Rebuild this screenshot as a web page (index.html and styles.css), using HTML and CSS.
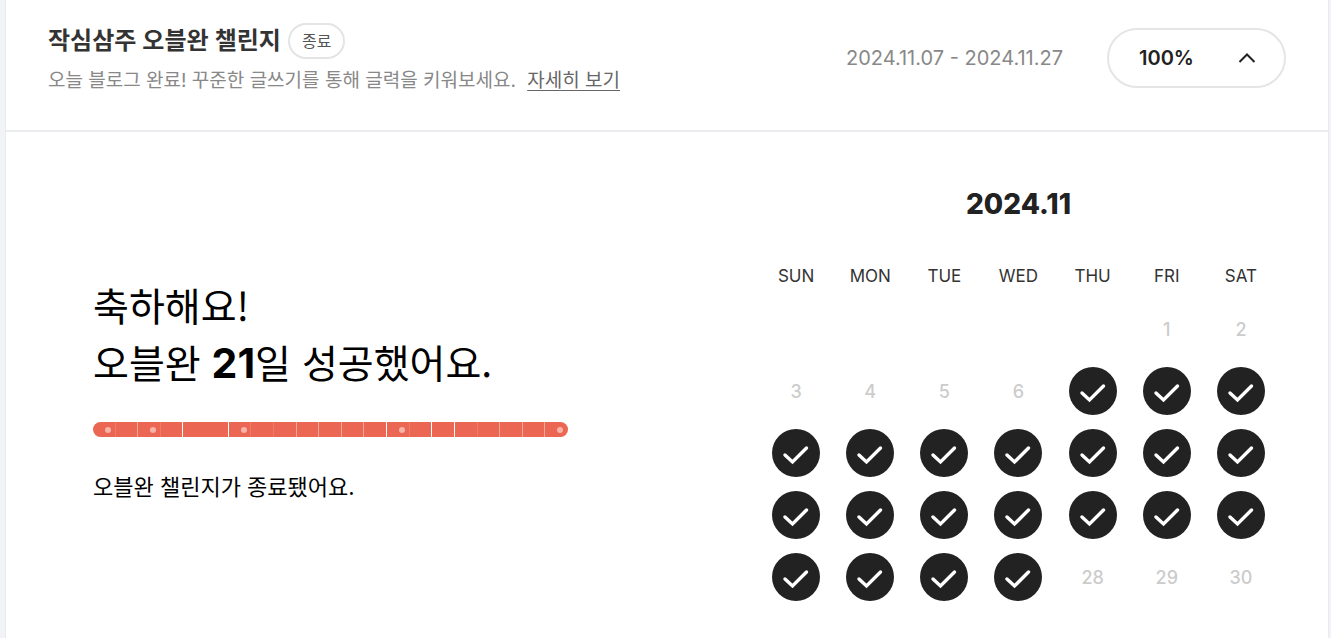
FILE: index.html
```html
<!DOCTYPE html>
<html lang="ko">
<head>
<meta charset="utf-8">
<meta name="viewport" content="width=device-width, initial-scale=1">
<title>작심삼주 오블완 챌린지</title>
<link rel="stylesheet" href="styles.css">
</head>
<body>
<svg class="sprite" aria-hidden="true">
  <symbol id="check" viewBox="0 0 48 48">
    <circle cx="24" cy="24" r="24" fill="#222"/>
    <path d="M13 26l7.5 7L34.5 19" fill="none" stroke="#fff" stroke-width="3.4" stroke-linecap="round" stroke-linejoin="miter"/>
  </symbol>
</svg>
<main class="card">
  <header class="head">
    <div class="intro">
      <div class="title-row">
        <h1 class="title">작심삼주 오블완 챌린지</h1>
        <span class="badge">종료</span>
      </div>
      <p class="desc">오늘 블로그 완료! 꾸준한 글쓰기를 통해 글력을 키워보세요. <a class="more" href="#">자세히 보기</a></p>
    </div>
    <div class="status">
      <span class="period">2024.11.07 - 2024.11.27</span>
      <button class="toggle" type="button" aria-expanded="true">100%
        <svg class="arrow" viewBox="0 0 18 12" aria-hidden="true"><path d="M1.5 10L9 2.5 16.5 10" fill="none" stroke="#222" stroke-width="2"/></svg>
      </button>
    </div>
  </header>
  <div class="content">
    <section class="result">
      <h2 class="congrats">축하해요!<br>오블완 <strong>21</strong>일 성공했어요.</h2>
      <div class="bar" role="img" aria-label="21일 중 21일 완료">
        <i class="seg dot faint"></i><i class="seg"></i><i class="seg dot faint"></i><i class="seg strong"></i><i class="seg none"></i><i class="seg strong"></i><i class="seg dot faint"></i><i class="seg faint"></i><i class="seg"></i><i class="seg"></i><i class="seg"></i><i class="seg"></i><i class="seg strong"></i><i class="seg dot faint"></i><i class="seg strong"></i><i class="seg strong"></i><i class="seg faint"></i><i class="seg"></i><i class="seg"></i><i class="seg"></i><i class="seg dot none"></i>
      </div>
      <p class="note">오블완 챌린지가 종료됐어요.</p>
    </section>
    <table class="calendar">
      <caption class="month">2024.11</caption>
      <thead>
        <tr><th scope="col">SUN</th><th scope="col">MON</th><th scope="col">TUE</th><th scope="col">WED</th><th scope="col">THU</th><th scope="col">FRI</th><th scope="col">SAT</th></tr>
      </thead>
      <tbody>
        <tr><td></td><td></td><td></td><td></td><td></td><td>1</td><td>2</td></tr>
        <tr><td>3</td><td>4</td><td>5</td><td>6</td><td><svg class="done"><use href="#check"/></svg></td><td><svg class="done"><use href="#check"/></svg></td><td><svg class="done"><use href="#check"/></svg></td></tr>
        <tr><td><svg class="done"><use href="#check"/></svg></td><td><svg class="done"><use href="#check"/></svg></td><td><svg class="done"><use href="#check"/></svg></td><td><svg class="done"><use href="#check"/></svg></td><td><svg class="done"><use href="#check"/></svg></td><td><svg class="done"><use href="#check"/></svg></td><td><svg class="done"><use href="#check"/></svg></td></tr>
        <tr><td><svg class="done"><use href="#check"/></svg></td><td><svg class="done"><use href="#check"/></svg></td><td><svg class="done"><use href="#check"/></svg></td><td><svg class="done"><use href="#check"/></svg></td><td><svg class="done"><use href="#check"/></svg></td><td><svg class="done"><use href="#check"/></svg></td><td><svg class="done"><use href="#check"/></svg></td></tr>
        <tr><td><svg class="done"><use href="#check"/></svg></td><td><svg class="done"><use href="#check"/></svg></td><td><svg class="done"><use href="#check"/></svg></td><td><svg class="done"><use href="#check"/></svg></td><td>28</td><td>29</td><td>30</td></tr>
      </tbody>
    </table>
  </div>
</main>
</body>
</html>
```
FILE: styles.css
```css
* {
  box-sizing: border-box;
}

body {
  margin: 0;
  padding: 0 2px 0 5px;
  background: #f2f3f7;
  font-family: Inter, "Noto Sans CJK KR", sans-serif;
  color: #000;
}

h1, h2, p {
  margin: 0;
}

.sprite {
  position: absolute;
  width: 0;
  height: 0;
}

.card {
  min-height: 100vh;
  background: #fff;
  border: solid #e9ebf1;
  border-width: 0 1px;
}

.head {
  display: flex;
  justify-content: space-between;
  align-items: flex-start;
  padding: 23px 42px 35px 42px;
  border-bottom: 2px solid #ebecef;
}

.title-row {
  display: flex;
  align-items: center;
  gap: 7px;
}

.title {
  font-size: 24px;
  line-height: 36px;
  font-weight: 600;
  color: #333;
}

.badge {
  padding: 0 12px;
  border: 2px solid #e4e4e4;
  border-radius: 18px;
  font-size: 16px;
  line-height: 32px;
  color: #555;
}

.desc {
  padding-top: 8px;
  font-size: 19px;
  line-height: 28px;
  font-weight: 400;
  color: #888;
}

.more {
  margin-left: 6px;
  color: #666;
  text-underline-offset: 3px;
}

.status {
  display: flex;
  align-items: center;
  gap: 44px;
  padding-top: 5px;
}

.period {
  font-size: 20px;
  color: #888;
}

.toggle {
  display: flex;
  align-items: center;
  justify-content: space-between;
  width: 179px;
  height: 60px;
  padding: 0 28px 0 30px;
  background: #fff;
  border: 2px solid #e5e5e5;
  border-radius: 30px;
  font: 600 20px Inter, sans-serif;
  color: #222;
}

.arrow {
  width: 18px;
  height: 12px;
}

.content {
  display: flex;
  justify-content: space-between;
  align-items: flex-start;
  padding: 54px 50px 28px 87px;
}

.result {
  padding-top: 90px;
}

.congrats {
  font-family: "Noto Sans CJK KR", sans-serif;
  font-size: 39px;
  line-height: 57px;
  font-weight: 400;
}

.congrats strong {
  font-family: Inter, sans-serif;
  font-size: 41px;
  line-height: 40px;
  font-weight: 700;
}

.bar {
  display: grid;
  grid-template-columns: repeat(21, 1fr);
  width: 475px;
  height: 15px;
  margin-top: 32px;
  overflow: hidden;
  border-radius: 8px;
  background: #eb6753;
}

.seg {
  display: flex;
  align-items: center;
  justify-content: center;
  border-right: 1px solid #f4a79b;
}

.faint {
  border-color: #ee7b69;
}

.strong {
  border-color: #fff;
}

.none {
  border-color: transparent;
}

.dot::before {
  content: "";
  width: 6px;
  height: 6px;
  margin-left: 8px;
  border-radius: 50%;
  background: #f8b3a9;
}

.note {
  padding-top: 34px;
  font-size: 22px;
  line-height: 32px;
}

.calendar {
  width: 519px;
  table-layout: fixed;
  border-collapse: collapse;
  text-align: center;
}

.month {
  padding-bottom: 31px;
  font-size: 28px;
  line-height: 36px;
  font-weight: 800;
  color: #222;
}

.calendar th {
  height: 45px;
  padding: 0;
  font-size: 17px;
  font-weight: 400;
  color: #333;
}

.calendar td {
  height: 62px;
  padding: 0;
  font-size: 18px;
  font-weight: 500;
  color: #ccc;
}

.done {
  display: block;
  width: 48px;
  height: 48px;
  margin: 0 auto;
}
```
